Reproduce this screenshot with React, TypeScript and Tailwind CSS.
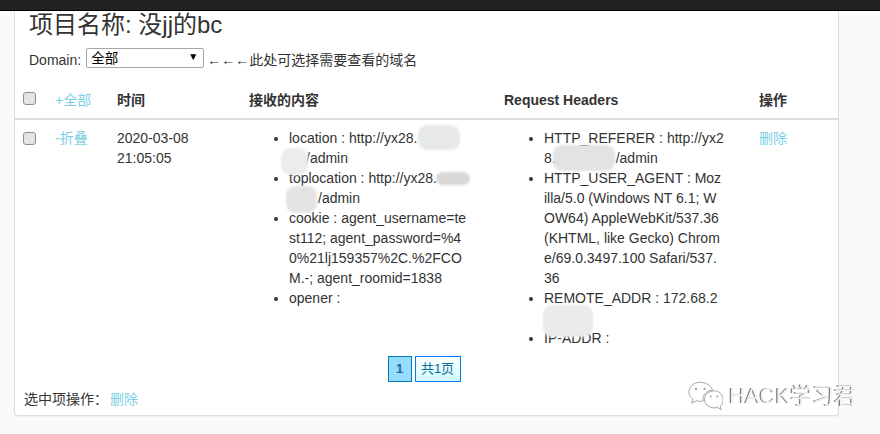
const font = { fontFamily: '"Liberation Sans","Noto Sans CJK SC",sans-serif' };

function Box() {
  return <span className="block h-[13px] w-[13px] rounded-[3px] border border-[#8f8f8f] bg-[#e4e4e4]" />;
}

function Patch({ className }: { className: string }) {
  return <span className={"absolute rounded-[9px] blur-[1px] " + className} />;
}

function WeChat() {
  return (
    <svg width="36" height="33" viewBox="0 0 38 34" fill="#fff" stroke="#8a8a8a" strokeWidth="0.8">
      <path d="M14 2C7 2 2 6.500 2 12c0 3.200 1.700 5.800 4.300 7.700L5 24l4.800-2.500c1.400.4 2.800.6 4.200.6 1 0 2-.1 3-.3C16 15 21 10.500 27 10.500 25.500 5.500 20.300 2 14 2z" />
      <path d="M29 11c-6 0-10.500 4-10.500 9s4.500 9 10.500 9c1.100 0 2.200-.2 3.300-.5L36 31l-1-3.700c2-1.600 3.200-4.300 3-7.300-.3-5-4-9-9-9z" />
      <circle cx="9.500" cy="9" r="1.200" fill="#999" stroke="none" />
      <circle cx="18.500" cy="9" r="1.200" fill="#999" stroke="none" />
      <circle cx="25" cy="17" r="1" fill="#999" stroke="none" />
      <circle cx="32" cy="17" r="1" fill="#999" stroke="none" />
    </svg>
  );
}

export default function App() {
  return (
    <div className="relative h-[434px] w-[880px] overflow-hidden bg-[#fafafa] text-[14px] leading-[20px] text-[#333]" style={font}>
      <div className="h-[11px] border-b border-black bg-[#222]" />
      <div className="ml-[14px] h-[405px] w-[825px] rounded-b-[4px] border-x border-b border-[#ddd] bg-white shadow-[0_1px_1px_rgba(0,0,0,0.05)]">
        <h1 className="pl-[14px] text-[24px] leading-[28px]">项目名称: 没jj的bc</h1>
        <div className="mt-[9px] flex items-start pl-[14px]">
          <span className="pt-[2px]">Domain:</span>
          <span className="ml-[5px] flex h-[20px] w-[118px] items-center justify-between rounded-[2px] border border-[#a6a6a6] bg-white pl-[4px] pr-[5px] pt-[2px] text-[13.500px] text-black">
            全部<span className="pb-[4px] text-[10px]">▼</span>
          </span>
          <span className="ml-[3px] pt-[2px]">←←←此处可选择需要查看的域名</span>
        </div>

        <div className="mt-[10px] flex h-[40px] items-center border-b-2 border-[#ddd] pt-[2px] font-bold">
          <span className="w-[40px] pl-[8px] pb-[3px]"><Box /></span>
          <a className="w-[62px] font-normal text-[#7dcfe6]">+全部</a>
          <span className="w-[132px]">时间</span>
          <span className="w-[255px]">接收的内容</span>
          <span className="w-[255px]">Request Headers</span>
          <span>操作</span>
        </div>

        <div className="flex h-[236px] pt-[8px]">
          <span className="w-[40px] pl-[8px] pt-[4px]"><Box /></span>
          <a className="w-[62px] text-[#7dcfe6]">-折叠</a>
          <span className="w-[132px]">2020-03-08<br />21:05:05</span>

          <div className="relative w-[255px] pl-[40px] whitespace-nowrap">
            <ul className="list-disc">
              <li>location : http://yx28.<br /><span className="inline-block w-[17px]" />/admin</li>
              <li>toplocation : http://yx28.<br /><span className="inline-block w-[29px]" />/admin</li>
              <li>cookie : agent_username=te<br />st112; agent_password=%4<br />0%21lj159357%2C.%2FCO<br />M.-; agent_roomid=1838</li>
              <li>opener :</li>
            </ul>
            <Patch className="left-[169px] top-[-3px] h-[25px] w-[42px] bg-[#e6e8ea]" />
            <Patch className="left-[32px] top-[20px] h-[27px] w-[27px] bg-[#ececec]" />
            <Patch className="left-[187px] top-[44px] h-[13px] w-[34px] bg-[#d8d8d8]" />
            <Patch className="left-[37px] top-[58px] h-[27px] w-[31px] bg-[#e4e4e4]" />
          </div>

          <div className="relative w-[255px] pl-[40px] whitespace-nowrap">
            <ul className="list-disc">
              <li>HTTP_REFERER : http://yx2<br />8.<span className="inline-block w-[60px]" />/admin</li>
              <li>HTTP_USER_AGENT : Moz<br />illa/5.0 (Windows NT 6.1; W<br />OW64) AppleWebKit/537.36<br />(KHTML, like Gecko) Chrom<br />e/69.0.3497.100 Safari/537.<br />36</li>
              <li>REMOTE_ADDR : 172.68.2</li>
              <li className="mt-[20px]">IP-ADDR :</li>
            </ul>
            <Patch className="left-[49px] top-[17px] h-[26px] w-[62px] bg-[#e2e3e4]" />
            <Patch className="left-[39px] top-[177px] h-[32px] w-[50px] bg-[#ebebeb]" />
          </div>

          <a className="text-[#7dcfe6]">删除</a>
        </div>

        <div className="flex justify-center gap-[3px] pr-[5px] text-[13px]">
          <span className="flex h-[26px] w-[24px] items-center justify-center border border-[#0080b0] bg-[#96dcff] font-bold text-[#1a6a90]">1</span>
          <span className="flex h-[26px] w-[46px] items-center justify-center border border-[#0078f0] bg-gradient-to-b from-white to-[#d0fbff] text-[#0a6f96]">共1页</span>
        </div>

        <div className="mt-[7px] pl-[9px]">
          选中项操作：<a className="ml-[2px] text-[#7dcfe6]">删除</a>
        </div>
      </div>

      <div className="absolute left-[687px] top-[379px] flex items-center gap-[6px]">
        <WeChat />
        <span className="text-[22px] leading-[34px] text-[#f2f2f2] [text-shadow:-1px_0_0_#555]">HACK学习君</span>
      </div>
    </div>
  );
}
